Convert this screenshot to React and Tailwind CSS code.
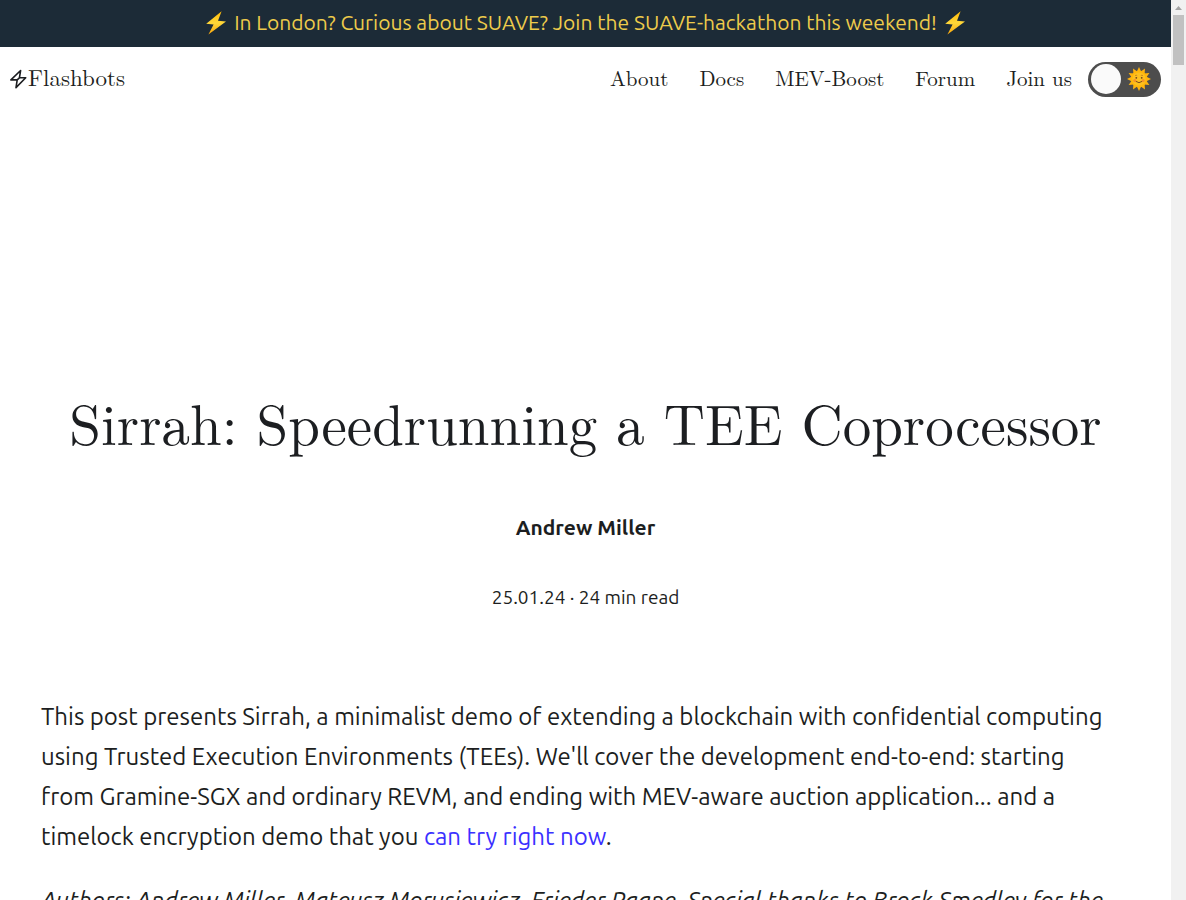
const SERIF = "font-['Latin_Modern_Roman','Liberation_Serif',serif]";

const navLinks = ["About", "Docs", "MEV-Boost", "Forum", "Join us"];

function Bolt() {
  return (
    <svg viewBox="0 0 24 24" className="h-6 w-6 shrink-0" aria-hidden="true">
      <defs>
        <linearGradient id="bolt" x1="0" y1="0" x2="0" y2="1">
          <stop offset="0" stopColor="#feb804" />
          <stop offset="0.5" stopColor="#ffd83a" />
          <stop offset="1" stopColor="#f9a40a" />
        </linearGradient>
      </defs>
      <path d="M17.6 0.200 2.200 12.800l7.400.8L4.400 23.600 22 10.400l-8-.6z" fill="url(#bolt)" />
    </svg>
  );
}

function Sun() {
  const rays = Array.from({ length: 12 }, (_, i) => i * 30);
  return (
    <svg viewBox="-12 -12 24 24" className="h-6 w-6" aria-hidden="true">
      {rays.map((a) => (
        <path key={a} d="M-2.4-7 0-12l2.4 5z" fill="#ffb30f" transform={`rotate(${a})`} />
      ))}
      <circle r="8" fill="#ffb70a" />
      <circle r="6.6" fill="#fdc020" />
      <circle cx="-4.2" cy="1.6" r="1.6" fill="#f79329" />
      <circle cx="4.2" cy="1.6" r="1.6" fill="#f79329" />
      <path d="M-4-3.400q1.200-.8 2.200 0M1.800-3.400q1.200-.8 2.200 0" fill="none" stroke="#a8651c" strokeWidth=".6" />
      <circle cx="-2.7" cy="-1.2" r=".9" fill="#6d4321" />
      <circle cx="2.7" cy="-1.2" r=".9" fill="#6d4321" />
      <path d="M-2.8 2.600Q0 5 2.8 2.600" fill="none" stroke="#7a4a1e" strokeWidth="1" strokeLinecap="round" />
    </svg>
  );
}

export default function App() {
  return (
    <div className="flex h-screen overflow-hidden bg-white font-['Ubuntu','Noto_Sans',sans-serif] text-[#1c1e21]">
      <div className="min-w-0 flex-1">
        <div className="flex h-[47px] items-center justify-center gap-1.5 bg-[#1c2b37] pb-[2px] text-[21px] whitespace-nowrap text-[#eecb4b]">
          <Bolt />
          <a href="#hackathon">In London? Curious about SUAVE? Join the SUAVE-hackathon this weekend!</a>
          <Bolt />
        </div>

        <header className={`flex h-16 items-center justify-between px-[10px] ${SERIF}`}>
          <a href="#home" className="flex items-center text-[23px] leading-[30px]">
            <svg viewBox="0 0 18 20" className="h-5 w-[18px]" fill="none" stroke="currentColor" strokeWidth="1.6" strokeLinejoin="round" aria-hidden="true">
              <path d="M10.6 1.500.9 10.900h6.300L6 18.600 15.700 8.800H9.400zM9.400 8.800 7.200 10.900" />
            </svg>
            <span className="pb-1">Flashbots</span>
          </a>
          <div className="flex items-center gap-4">
            <nav className="flex gap-[31px] pb-1 text-[21px] leading-[30px]">
              {navLinks.map((t) => (
                <a key={t} href="#nav">{t}</a>
              ))}
            </nav>
            <button aria-label="Switch to dark mode" className="flex h-[35px] w-[73px] items-center justify-between rounded-full bg-[#4d4d4d] pr-[10px] pl-[3px]">
              <span className="h-[30px] w-[30px] rounded-full bg-[#fafafa]" />
              <Sun />
            </button>
          </div>
        </header>

        <article className="px-[41px] pt-[275px]">
          <h1 className={`text-center text-[57px] leading-[72px] whitespace-nowrap ${SERIF}`}>
            Sirrah: Speedrunning a TEE Coprocessor
          </h1>
          <p className="mt-[53px] text-center text-[21px] leading-8 font-bold">Andrew Miller</p>
          <p className="mt-[40px] text-center text-[19px] leading-7">25.01.24 · 24 min read</p>
          <p className="mt-[86px] text-[24px] leading-[40px] whitespace-nowrap">
            This post presents Sirrah, a minimalist demo of extending a blockchain with confidential computing
            <br />
            using Trusted Execution Environments (TEEs). We'll cover the development end-to-end: starting
            <br />
            from Gramine-SGX and ordinary REVM, and ending with MEV-aware auction application... and a
            <br />
            timelock encryption demo that you <a href="#demo" className="text-[#3a30ff]">can try right now</a>.
          </p>
          <p className="mt-6 text-[24px] leading-[40px] whitespace-nowrap italic">
            Authors: Andrew Miller, Mateusz Morusiewicz, Frieder Paape. Special thanks to Brock Smedley for the
          </p>
        </article>
      </div>

      <div className="flex w-[15px] flex-col items-center bg-[#f1f1f1]" aria-hidden="true">
        <svg viewBox="0 0 15 15" className="h-[15px] w-[15px]">
          <path d="M4 10h7L7.500 6z" fill="#a3a3a3" />
        </svg>
        <div className="h-[50px] w-[11px] bg-[#c1c1c1]" />
      </div>
    </div>
  );
}
